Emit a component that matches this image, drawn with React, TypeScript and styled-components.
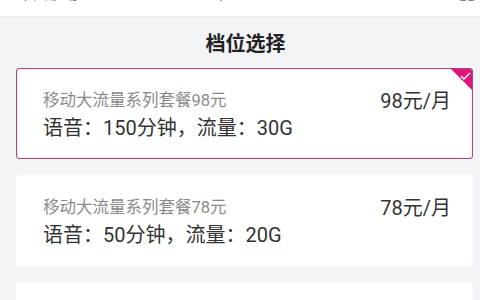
import React from "react";
import styled, { createGlobalStyle } from "styled-components";

const Global = createGlobalStyle`
  html, body { margin: 0; padding: 0; background: #f3f4f8; }
  body { font-family: Roboto, "Noto Sans CJK SC", "Noto Sans", sans-serif; }
  * { box-sizing: border-box; }
`;

const Page = styled.div`
  width: 480px;
  height: 300px;
  overflow: hidden;
  background: #f3f4f8;
`;

const TopBar = styled.div`
  height: 17px;
  background: #ffffff;
  border-bottom: 1px solid #e9eaee;
  display: flex;
  justify-content: space-between;
  align-items: flex-start;
  padding: 0 5px 0 18px;
  overflow: hidden;
`;

const TopText = styled.span`
  display: block;
  margin-top: -13px;
  font-size: 15px;
  line-height: 15px;
  color: #777;
  white-space: nowrap;
`;

const Main = styled.div`
  padding: 0 7px 0 16px;
`;

const Title = styled.div`
  height: 51px;
  display: flex;
  align-items: center;
  justify-content: center;
  font-size: 20px;
  font-weight: 700;
  color: #222;
  padding-left: 2px;
`;

const List = styled.div`
  display: flex;
  flex-direction: column;
  gap: 16px;
`;

const Card = styled.div<{ $active?: boolean }>`
  position: relative;
  height: 91px;
  background: #ffffff;
  border-radius: 3px;
  border: 1px solid ${(p) => (p.$active ? "#a9477c" : "transparent")};
  box-shadow: ${(p) => (p.$active ? "inset 0 0 2px rgba(214,40,120,0.25)" : "none")};
  padding: 18px 21px 0 26px;
  overflow: hidden;
`;

const Row = styled.div`
  display: flex;
  justify-content: space-between;
  align-items: center;
  height: 24px;
`;

const Name = styled.span`
  font-size: 16.5px;
  color: #8a8a8a;
  white-space: nowrap;
`;

const Price = styled.span`
  font-size: 20px;
  color: #333;
  white-space: nowrap;
`;

const Detail = styled.div`
  margin-top: 2px;
  height: 30px;
  line-height: 30px;
  font-size: 20px;
  color: #333;
  white-space: nowrap;
`;

const Corner = styled.div`
  position: absolute;
  top: 0;
  right: 0;
  width: 21px;
  height: 21px;
  background: #e0157c;
  clip-path: polygon(0 0, 100% 0, 100% 100%);
  display: flex;
  justify-content: flex-end;
  align-items: flex-start;
  padding: 3px 1px 0 0;
`;

const plans = [
  { name: "移动大流量系列套餐98元", price: "98元/月", detail: "语音：150分钟，流量：30G", active: true },
  { name: "移动大流量系列套餐78元", price: "78元/月", detail: "语音：50分钟，流量：20G", active: false },
  { name: "移动大流量系列套餐58元", price: "58元/月", detail: "语音：30分钟，流量：10G", active: false },
];

export default function App() {
  return (
    <Page>
      <Global />
      <TopBar>
        <TopText>中国移动</TopText>
        <TopText>上午10:30 4G ●</TopText>
        <TopText>86% ▮▮</TopText>
      </TopBar>
      <Main>
        <Title>档位选择</Title>
        <List>
          {plans.map((p) => (
            <Card key={p.name} $active={p.active}>
              {p.active && (
                <Corner>
                  <svg width="11" height="8" viewBox="0 0 11 8">
                    <path d="M1 4 L4 7 L10 1" stroke="#fff" strokeWidth="1.4" fill="none" />
                  </svg>
                </Corner>
              )}
              <Row>
                <Name>{p.name}</Name>
                <Price>{p.price}</Price>
              </Row>
              <Detail>{p.detail}</Detail>
            </Card>
          ))}
        </List>
      </Main>
    </Page>
  );
}
